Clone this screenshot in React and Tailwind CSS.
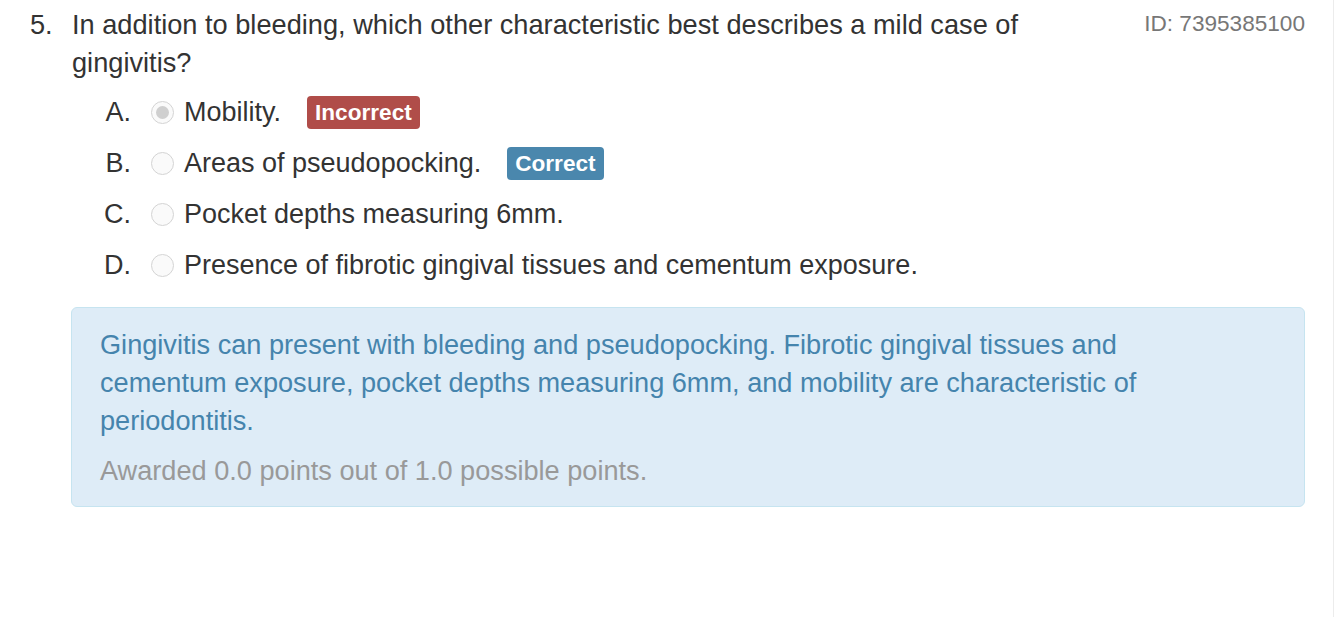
const OPTIONS = [
  { key: 'A', text: 'Mobility.', checked: true, badge: 'incorrect' },
  { key: 'B', text: 'Areas of pseudopocking.', badge: 'correct' },
  { key: 'C', text: 'Pocket depths measuring 6mm.' },
  { key: 'D', text: 'Presence of fibrotic gingival tissues and cementum exposure.' },
];

function Radio({ checked }) {
  return (
    <span className="w-[23px] h-[23px] rounded-full border border-[#d4d4d4] bg-[#fafafa] flex items-center justify-center shrink-0">
      {checked && <span className="w-[13px] h-[13px] rounded-full bg-[#cfcfcf]" />}
    </span>
  );
}

function Badge({ kind }) {
  const cls = kind === 'incorrect' ? 'bg-[#b04d49]' : 'bg-[#4a87ad]';
  return (
    <span className={`${cls} text-white font-bold text-[22.6px] leading-[33px] px-[8px] rounded-[4px] ml-[26px]`}>
      {kind === 'incorrect' ? 'Incorrect' : 'Correct'}
    </span>
  );
}

export default function App() {
  return (
    <div className="w-[1334px] h-[617px] bg-white text-[#333] font-['Liberation_Sans',Arial,sans-serif] text-[27px] leading-[38px] relative">
      <div className="flex pl-[30px] pr-[29px] pt-[6px]">
        <div className="w-[42px] shrink-0 text-[27.2px]">5.</div>
        <div className="flex-1">
          <div className="flex justify-between">
            <div className="w-[1040px] text-[27.2px]">
              In addition to bleeding, which other characteristic best describes a mild case of gingivitis?
            </div>
            <div className="text-[#777] text-[22.6px] leading-[38px] -mt-[1px]">ID: 7395385100</div>
          </div>
          <div className="flex flex-col gap-[13px] mt-[11px]">
            {OPTIONS.map(o => (
              <div key={o.key} className="flex items-center h-[38px]">
                <span className="w-[59px] text-right">{o.key}.</span>
                <span className="ml-[20px]"><Radio checked={o.checked} /></span>
                <span className="ml-[10px]">{o.text}</span>
                {o.badge && <Badge kind={o.badge} />}
              </div>
            ))}
          </div>
          <div className="mt-[23px] -ml-[1px] bg-[#deecf7] border border-[#c6e4f0] rounded-[6px] pl-[28px] pr-[28px] pt-[18px] pb-[16px] text-[27.15px]">
            <p className="text-[#4584ad] w-[1140px]">
              Gingivitis can present with bleeding and pseudopocking. Fibrotic gingival tissues and cementum exposure, pocket depths measuring 6mm, and mobility are characteristic of periodontitis.
            </p>
            <p className="text-[#999] mt-[12px]">Awarded 0.0 points out of 1.0 possible points.</p>
          </div>
        </div>
      </div>
      <div className="absolute top-0 right-0 w-[1px] h-full bg-[#ececec]" />
    </div>
  );
}
